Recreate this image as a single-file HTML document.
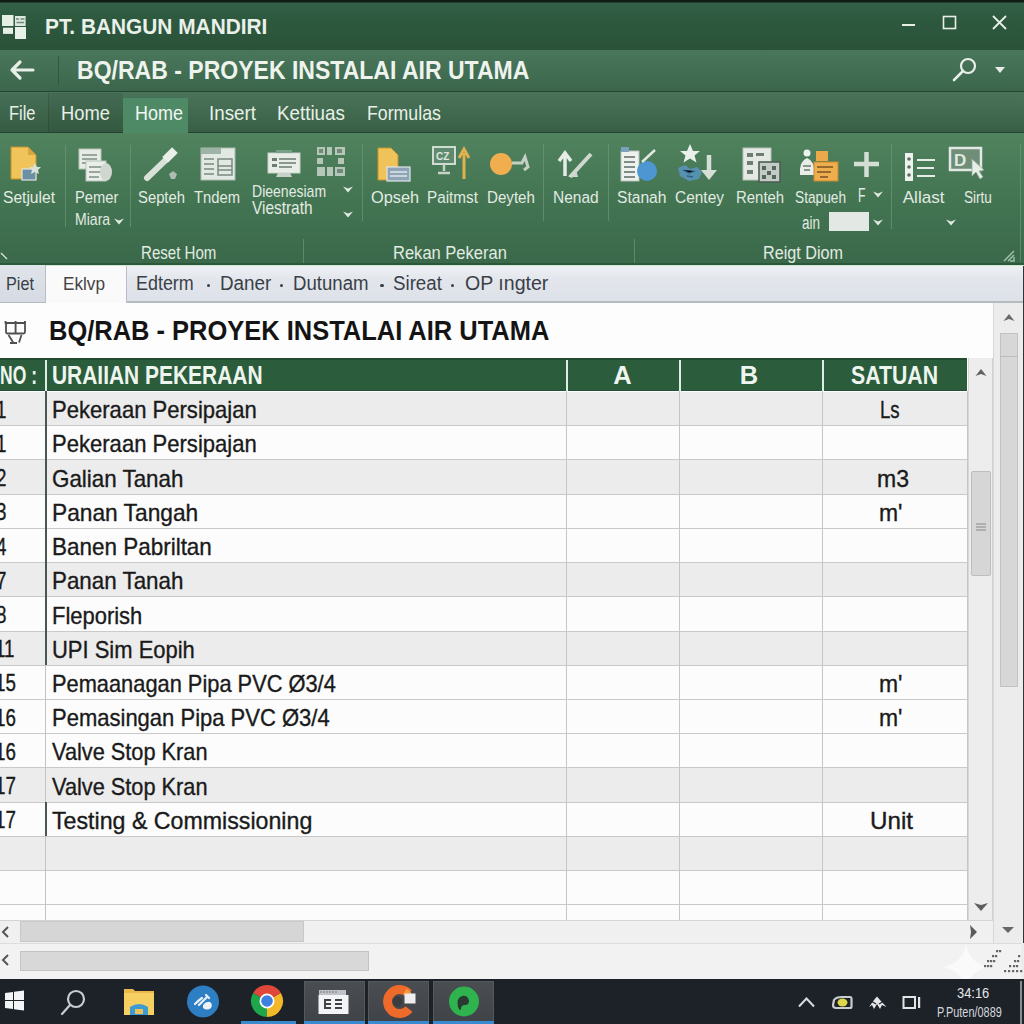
<!DOCTYPE html>
<html><head><meta charset="utf-8">
<style>
*{margin:0;padding:0;box-sizing:border-box}
html,body{width:1024px;height:1024px;overflow:hidden;background:#fff;font-family:"Liberation Sans",sans-serif}
.a{position:absolute}
.t{position:absolute;white-space:nowrap;line-height:1;transform-origin:0 0}
svg{position:absolute;overflow:visible}
</style></head><body>

<div class="a" style="left:0;top:0;width:1024px;height:50px;background:linear-gradient(#0f1c14 0,#0f1c14 2px,#34604a 3px,#2e5a40 30%,#2a5239 100%)"></div>
<svg style="left:0;top:0" width="40" height="50">
<rect x="2" y="15" width="11.5" height="11" fill="#e6efe6"/>
<rect x="15" y="16" width="10.6" height="10" fill="#dfe8df"/>
<path d="M16 19 H19 M20.5 19 H24.5 M16.5 22.5 H24" stroke="#6f8a78" stroke-width="1.6"/>
<rect x="3" y="27.7" width="10" height="6.2" fill="#e6efe6"/>
<rect x="15" y="27" width="11" height="12" fill="#e8f0e8"/>
</svg>
<div class="t" style="left:45.4px;top:15.5px;font-size:22.17px;font-weight:bold;color:#eaf1ea;transform:scaleX(0.941);">PT. BANGUN MANDIRI</div>
<svg style="left:880px;top:0" width="144" height="50">
<rect x="22" y="24" width="13" height="2" fill="#e8efe8"/>
<rect x="63.5" y="16.5" width="12" height="12" fill="none" stroke="#e8efe8" stroke-width="1.6"/>
<path d="M113 16 L126 29 M126 16 L113 29" stroke="#e8efe8" stroke-width="1.8"/>
</svg>
<div class="a" style="left:0;top:50px;width:1024px;height:42px;background:linear-gradient(#4a765c,#416d52 60%,#3b664b);border-bottom:1.5px solid #24452f"></div>
<svg style="left:0;top:50px" width="80" height="42">
<path d="M12 20 H33 M12 20 L20 12 M12 20 L20 28" stroke="#e8efe8" stroke-width="3.2" fill="none" stroke-linecap="round" stroke-linejoin="round"/>
<rect x="58" y="6" width="1" height="29" fill="#2f5a3d"/>
</svg>
<div class="t" style="left:76.8px;top:57.2px;font-size:26.38px;font-weight:bold;color:#eef3ee;transform:scaleX(0.873);">BQ/RAB - PROYEK INSTALAI AIR UTAMA</div>
<svg style="left:940px;top:50px" width="84" height="42">
<circle cx="28" cy="16" r="7" fill="none" stroke="#e8efe8" stroke-width="2.2"/>
<path d="M23 21 L14 30" stroke="#e8efe8" stroke-width="2.6" stroke-linecap="round"/>
<path d="M55 17 L65 17 L60 23 Z" fill="#e8efe8"/>
</svg>
<div class="a" style="left:0;top:92px;width:1024px;height:41px;background:linear-gradient(#4a735b,#416a50 50%,#385f46);border-bottom:1.5px solid #23432e"></div>
<div class="a" style="left:0;top:93px;width:48px;height:39px;background:rgba(0,0,0,.03)"></div>
<div class="a" style="left:48px;top:93px;width:75px;height:39px;background:rgba(0,0,0,.07);border-left:1px solid rgba(0,0,0,.12)"></div>
<div class="a" style="left:123px;top:98px;width:65px;height:35px;background:#4f8a67"></div>
<div class="t" style="left:8.5px;top:102.1px;font-size:21.01px;color:#e8f0e8;transform:scaleX(0.783);">File</div>
<div class="t" style="left:61.0px;top:102.1px;font-size:21.01px;color:#e8f0e8;transform:scaleX(0.873);">Home</div>
<div class="t" style="left:135.0px;top:102.1px;font-size:21.01px;color:#f2f7f2;transform:scaleX(0.855);">Home</div>
<div class="t" style="left:209.0px;top:102.1px;font-size:21.01px;color:#e8f0e8;transform:scaleX(0.895);">Insert</div>
<div class="t" style="left:277.0px;top:102.1px;font-size:21.01px;color:#e8f0e8;transform:scaleX(0.895);">Kettiuas</div>
<div class="t" style="left:367.0px;top:102.1px;font-size:21.01px;color:#e8f0e8;transform:scaleX(0.844);">Formulas</div>
<div class="a" style="left:0;top:133px;width:1024px;height:132px;background:linear-gradient(#52835f,#487a57 30%,#3f704f 70%,#3a684a)"></div>
<div class="a" style="left:0;top:263px;width:1024px;height:2px;background:#2c583a"></div>
<div class="a" style="left:65px;top:145px;width:1px;height:82px;background:#6a9878;opacity:.7"></div>
<div class="a" style="left:130px;top:145px;width:1px;height:82px;background:#6a9878;opacity:.7"></div>
<div class="a" style="left:362px;top:144px;width:1px;height:77px;background:#6a9878;opacity:.7"></div>
<div class="a" style="left:543px;top:144px;width:1px;height:77px;background:#6a9878;opacity:.7"></div>
<div class="a" style="left:608px;top:144px;width:1px;height:77px;background:#6a9878;opacity:.7"></div>
<div class="a" style="left:891px;top:144px;width:1px;height:85px;background:#6a9878;opacity:.7"></div>
<div class="a" style="left:1020px;top:144px;width:1px;height:118px;background:#6a9878;opacity:.7"></div>
<div class="a" style="left:303px;top:239px;width:1px;height:24px;background:#6a9878;opacity:.7"></div>
<div class="a" style="left:634px;top:239px;width:1px;height:24px;background:#6a9878;opacity:.7"></div>
<div class="t" style="left:3.0px;top:189.1px;font-size:17.10px;color:#e2ebe2;transform:scaleX(0.912);">Setjulet</div>
<div class="t" style="left:138.0px;top:189.1px;font-size:17.10px;color:#e2ebe2;transform:scaleX(0.867);">Septeh</div>
<div class="t" style="left:194.0px;top:189.1px;font-size:17.10px;color:#e2ebe2;transform:scaleX(0.865);">Tndem</div>
<div class="t" style="left:371.4px;top:189.1px;font-size:17.10px;color:#e2ebe2;transform:scaleX(0.957);">Opseh</div>
<div class="t" style="left:427.0px;top:189.1px;font-size:17.10px;color:#e2ebe2;transform:scaleX(0.894);">Paitmst</div>
<div class="t" style="left:487.0px;top:189.1px;font-size:17.10px;color:#e2ebe2;transform:scaleX(0.885);">Deyteh</div>
<div class="t" style="left:553.0px;top:189.1px;font-size:17.10px;color:#e2ebe2;transform:scaleX(0.905);">Nenad</div>
<div class="t" style="left:616.5px;top:189.1px;font-size:17.10px;color:#e2ebe2;transform:scaleX(0.913);">Stanah</div>
<div class="t" style="left:675.0px;top:189.1px;font-size:17.10px;color:#e2ebe2;transform:scaleX(0.904);">Centey</div>
<div class="t" style="left:735.8px;top:189.1px;font-size:17.10px;color:#e2ebe2;transform:scaleX(0.874);">Renteh</div>
<div class="t" style="left:795.0px;top:189.1px;font-size:17.10px;color:#e2ebe2;transform:scaleX(0.801);">Stapueh</div>
<div class="t" style="left:902.7px;top:189.1px;font-size:17.10px;color:#e2ebe2;">Allast</div>
<div class="t" style="left:964.4px;top:189.1px;font-size:17.10px;color:#e2ebe2;transform:scaleX(0.794);">Sirtu</div>
<div class="t" style="left:74.7px;top:189.1px;font-size:17.10px;color:#e2ebe2;transform:scaleX(0.860);">Pemer</div>
<div class="t" style="left:74.7px;top:210.7px;font-size:17.39px;color:#e2ebe2;transform:scaleX(0.810);">Miara</div>
<div class="t" style="left:252.4px;top:182.9px;font-size:16.38px;color:#e2ebe2;transform:scaleX(0.858);">Dieenesiam</div>
<div class="t" style="left:252.4px;top:199.5px;font-size:17.97px;color:#e2ebe2;transform:scaleX(0.858);">Viestrath</div>
<div class="t" style="left:858.0px;top:184.8px;font-size:20.29px;color:#e2ebe2;transform:scaleX(0.606);">F</div>
<div class="t" style="left:801.5px;top:213.7px;font-size:18.00px;color:#e2ebe2;transform:scaleX(0.749);">ain</div>
<div class="a" style="left:829px;top:212px;width:40px;height:19px;background:#e4e8e4"></div>
<svg style="left:112.5px;top:217px" width="12" height="8"><path d="M1 1.5 L6 3.5 L11 1.5 L6 7.5 Z" fill="#e2ebe2"/></svg>
<svg style="left:342px;top:185px" width="12" height="8"><path d="M1 1.5 L6 3.5 L11 1.5 L6 7.5 Z" fill="#e2ebe2"/></svg>
<svg style="left:342px;top:210px" width="12" height="8"><path d="M1 1.5 L6 3.5 L11 1.5 L6 7.5 Z" fill="#e2ebe2"/></svg>
<svg style="left:872px;top:190px" width="12" height="8"><path d="M1 1.5 L6 3.5 L11 1.5 L6 7.5 Z" fill="#e2ebe2"/></svg>
<svg style="left:872px;top:218px" width="12" height="8"><path d="M1 1.5 L6 3.5 L11 1.5 L6 7.5 Z" fill="#e2ebe2"/></svg>
<svg style="left:944.5px;top:218px" width="12" height="8"><path d="M1 1.5 L6 3.5 L11 1.5 L6 7.5 Z" fill="#e2ebe2"/></svg>
<div class="t" style="left:140.6px;top:243.5px;font-size:18.70px;color:#e2ebe2;transform:scaleX(0.807);">Reset Hom</div>
<div class="t" style="left:393.0px;top:243.5px;font-size:18.70px;color:#e2ebe2;transform:scaleX(0.884);">Rekan Pekeran</div>
<div class="t" style="left:763.0px;top:243.5px;font-size:18.70px;color:#e2ebe2;transform:scaleX(0.865);">Reigt Diom</div>
<svg style="left:1000px;top:248px" width="20" height="16"><path d="M4 13 L14 3 M8 13 L14 7 M10 13 H14 V9" stroke="#9dbfa6" stroke-width="1.5" fill="none"/></svg>
<svg style="left:0;top:250px" width="10" height="10"><path d="M1 3 L7 9" stroke="#e2ebe2" stroke-width="1.2"/></svg>
<svg style="left:8px;top:145px" width="34" height="38">
<path d="M3 2 H20 L28 10 V34 H3 Z" fill="#f1c35b" stroke="#c6922c" stroke-width="1"/>
<path d="M20 2 V10 H28" fill="#d9a441"/>
<rect x="14" y="24" width="14" height="11" fill="#6b8fa3" stroke="#dfe6e0" stroke-width="1.2"/>
<path d="M27 18 L29 22 L33 22 L30 25 L31 29 L27 27 L23 29 L24 25 L21 22 L25 22 Z" fill="#d8e2d8"/>
</svg>
<svg style="left:77px;top:147px" width="38" height="38">
<rect x="2" y="2" width="22" height="20" fill="#e6ebe6" stroke="#b8c4b8"/>
<path d="M5 8 H20 M5 12 H20 M5 16 H14" stroke="#7f8f85" stroke-width="1.5"/>
<rect x="9" y="14" width="20" height="20" fill="#eaeeea" stroke="#b8c4b8"/>
<path d="M12 20 H26 M12 25 H26 M12 30 H22" stroke="#7f8f85" stroke-width="1.5"/>
<ellipse cx="29" cy="25" rx="6" ry="9" fill="#d0d6d0"/>
</svg>
<svg style="left:144px;top:146px" width="38" height="38">
<path d="M3 32 L28 8" stroke="#d8e2d8" stroke-width="6" stroke-linecap="round"/>
<rect x="22" y="2" width="8" height="14" transform="rotate(45 26 9)" fill="#e8eee8"/>
<path d="M29 25 L33 28 L31 33 L27 33 L25 28 Z" fill="#aebcae"/>
</svg>
<svg style="left:200px;top:146px" width="38" height="38">
<rect x="1" y="2" width="34" height="32" fill="#e2e8e2" stroke="#b0bcb0"/>
<rect x="1" y="2" width="20" height="6" fill="#9eb4a6"/>
<path d="M4 13 H14 M4 18 H14 M4 23 H14 M4 28 H14" stroke="#7a8a80" stroke-width="1.6"/>
<rect x="18" y="13" width="14" height="16" fill="none" stroke="#7a8a80" stroke-width="1.5"/>
<path d="M18 20 H32 M18 24 H32" stroke="#7a8a80" stroke-width="1.3"/>
</svg>
<svg style="left:266px;top:149px" width="36" height="32">
<rect x="2" y="4" width="32" height="20" fill="#e8ede8" stroke="#c8d2c8"/>
<rect x="6" y="9" width="5" height="3" fill="#6a7c70"/><rect x="6" y="15" width="5" height="3" fill="#6a7c70"/>
<path d="M13 10 H30 M13 14 H30 M13 18 H26" stroke="#6a7c70" stroke-width="1.6"/>
<path d="M12 24 L10 28 H26 L24 24" fill="#c9d2c9"/>
<rect x="10" y="1" width="16" height="3" fill="#7aa08a"/>
</svg>
<svg style="left:316px;top:145px" width="32" height="34">
<g fill="#b6c6b8"><rect x="1" y="2" width="8" height="8"/><rect x="11" y="2" width="5" height="8"/><rect x="19" y="2" width="10" height="8"/>
<rect x="1" y="13" width="6" height="6"/><rect x="22" y="13" width="6" height="6"/>
<rect x="1" y="22" width="8" height="9"/><rect x="11" y="22" width="6" height="9"/><rect x="19" y="22" width="10" height="9"/></g>
<g fill="#6f8a76"><rect x="3" y="4" width="4" height="4"/><rect x="21" y="4" width="5" height="4"/><rect x="21" y="24" width="6" height="4"/></g>
</svg>
<svg style="left:376px;top:146px" width="40" height="38">
<path d="M2 2 H15 L22 9 V34 H2 Z" fill="#f0c25a" stroke="#c8952f"/>
<rect x="11" y="21" width="23" height="14" fill="#8fa4b6" stroke="#dfe6ea" stroke-width="1.2"/>
<path d="M14 26 H31 M14 30 H31" stroke="#dfe6ea" stroke-width="1.3"/>
</svg>
<svg style="left:431px;top:145px" width="40" height="38">
<rect x="2" y="2" width="22" height="17" fill="#5f8a6e" stroke="#dde6dd" stroke-width="1.8"/>
<text x="5" y="15" font-size="10" font-family="Liberation Sans" font-weight="bold" fill="#dde6dd">CZ</text>
<path d="M13 19 V26 M7 28 H19" stroke="#c8d2c8" stroke-width="2.5"/>
<path d="M33 34 V8 M28 13 L33 4 L38 13" stroke="#e0b150" stroke-width="3" fill="none"/>
</svg>
<svg style="left:488px;top:150px" width="42" height="28">
<circle cx="13" cy="14" r="11" fill="#f0ae4f"/>
<path d="M24 13 H34 L37 7 L40 17 L36 20" stroke="#c4d0c4" stroke-width="3" fill="none"/>
</svg>
<svg style="left:556px;top:148px" width="40" height="32">
<path d="M9 28 V8 M3 13 L9 5 L15 13" stroke="#e6ece6" stroke-width="3.5" fill="none"/>
<path d="M14 29 L35 6" stroke="#cfd8cf" stroke-width="4"/>
<path d="M12 29 L20 22 L22 29 Z" fill="#cfd8cf"/>
</svg>
<svg style="left:620px;top:145px" width="40" height="40">
<rect x="1" y="6" width="18" height="30" fill="#eef2ee" stroke="#b8c2b8"/>
<rect x="1" y="2" width="8" height="5" fill="#7ea0c0"/>
<path d="M4 12 H15 M4 17 H15 M4 22 H15 M4 27 H15 M4 32 H15" stroke="#5c6c64" stroke-width="1.6"/>
<circle cx="27" cy="26" r="10" fill="#4d96d1"/>
<path d="M22 17 L35 5" stroke="#e0e8e0" stroke-width="2.5"/>
</svg>
<svg style="left:675px;top:143px" width="44" height="42">
<path d="M15 1 L18 8 L25 8 L19.5 12.5 L21.5 19.5 L15 15.5 L8.5 19.5 L10.5 12.5 L5 8 L12 8 Z" fill="#eaf0ea"/>
<path d="M3 25 L10 22 L15 26 L22 24 L27 29 L24 36 L14 38 L5 33 Z" fill="#5b95bf" opacity=".85"/>
<path d="M8 27 L14 30 L20 28 M12 33 L18 34" stroke="#2f5f80" stroke-width="1.3"/>
<path d="M34 12 V32" stroke="#d6dfd6" stroke-width="4.5"/><path d="M26 27 L34 37 L42 27 Z" fill="#d6dfd6"/>
</svg>
<svg style="left:742px;top:146px" width="40" height="38">
<rect x="1" y="2" width="28" height="32" fill="#e4e9e4" stroke="#b9c3b9"/>
<g fill="#6d7d73"><rect x="5" y="7" width="6" height="4"/><rect x="14" y="7" width="8" height="3"/><rect x="5" y="15" width="6" height="4"/><rect x="5" y="24" width="6" height="4"/></g>
<rect x="17" y="16" width="21" height="20" fill="#c2ccc4" stroke="#4d5d55" stroke-width="1.6"/>
<g fill="#56665c"><rect x="20" y="20" width="4" height="4"/><rect x="30" y="20" width="4" height="4"/><rect x="25" y="25" width="4" height="4"/><rect x="20" y="29" width="4" height="4"/><rect x="30" y="29" width="4" height="4"/></g>
</svg>
<svg style="left:798px;top:147px" width="44" height="38">
<circle cx="9" cy="6" r="3.5" fill="#eef2ee"/>
<path d="M2 28 Q1 14 9 11 Q17 14 17 28 Z" fill="#e8ede8"/>
<path d="M5 19 H13 M6 23 H12" stroke="#6a7a70" stroke-width="1.6"/>
<rect x="18" y="4" width="12" height="10" fill="#eaa94a"/>
<rect x="16" y="15" width="24" height="19" fill="#eeae50" stroke="#c88a30"/>
<path d="M19 20 H35 M19 25 H33 M22 30 H30" stroke="#7a5420" stroke-width="1.3"/>
</svg>
<svg style="left:852px;top:151px" width="30" height="28">
<path d="M2 13 H27 M14.5 1 V26" stroke="#d5ded5" stroke-width="4.5"/>
</svg>
<svg style="left:903px;top:151px" width="34" height="32">
<rect x="2" y="2" width="8" height="28" fill="#eef2ee"/>
<circle cx="6" cy="8" r="1.8" fill="#5a6a60"/><circle cx="6" cy="16" r="1.8" fill="#5a6a60"/><circle cx="6" cy="24" r="1.8" fill="#5a6a60"/>
<path d="M14 9 H32 M14 17 H31 M14 25 H32" stroke="#e6ece6" stroke-width="2.2"/>
</svg>
<svg style="left:948px;top:146px" width="40" height="36">
<rect x="2" y="2" width="31" height="22" fill="#6e8e78" stroke="#e2e8e2" stroke-width="2.5"/>
<text x="6" y="20" font-size="17" font-family="Liberation Sans" font-weight="bold" fill="#e2e9e2">D</text>
<path d="M24 13 L24 30 L28 26 L32 33 L35 31 L31 25 L36 24 Z" fill="#e8eee8" stroke="#9aa89e" stroke-width=".8"/>
</svg>
<div class="a" style="left:0;top:265px;width:1024px;height:38px;background:linear-gradient(#eef1f4,#e2e6ec 40%,#dde1e8);border-bottom:2px solid #b6bbc2;border-top:1px solid #cfe3d6"></div>
<div class="a" style="left:0;top:265px;width:46px;height:37px;background:linear-gradient(#dfe3ea,#d6dbe3);border-right:1px solid #b9bec6"></div>
<div class="a" style="left:46px;top:266px;width:81px;height:38px;background:#fafafa;border-right:1px solid #b9bec6"></div>
<div class="t" style="left:6.0px;top:273.9px;font-size:19.13px;color:#3a3f47;transform:scaleX(0.848);">Piet</div>
<div class="t" style="left:63.0px;top:273.9px;font-size:19.13px;color:#444;transform:scaleX(0.898);">Eklvp</div>
<div class="t" style="left:136.0px;top:273.6px;font-size:19.57px;color:#3a3f47;transform:scaleX(0.916);">Edterm</div>
<div class="t" style="left:219.6px;top:273.6px;font-size:19.57px;color:#3a3f47;transform:scaleX(0.964);">Daner</div>
<div class="t" style="left:292.9px;top:273.6px;font-size:19.57px;color:#3a3f47;transform:scaleX(0.952);">Dutunam</div>
<div class="t" style="left:393.0px;top:273.6px;font-size:19.57px;color:#3a3f47;transform:scaleX(0.956);">Sireat</div>
<div class="t" style="left:465.0px;top:273.6px;font-size:19.57px;color:#3a3f47;">OP ıngter</div>
<div class="a" style="left:206.7px;top:284px;width:3.4px;height:3.4px;border-radius:2px;background:#3a3f47"></div>
<div class="a" style="left:279.9px;top:284px;width:3.4px;height:3.4px;border-radius:2px;background:#3a3f47"></div>
<div class="a" style="left:380.3px;top:284px;width:3.4px;height:3.4px;border-radius:2px;background:#3a3f47"></div>
<div class="a" style="left:450.8px;top:284px;width:3.4px;height:3.4px;border-radius:2px;background:#3a3f47"></div>
<div class="a" style="left:0;top:303px;width:993px;height:55px;background:#fdfdfd"></div>
<svg style="left:0;top:312px" width="32" height="40">
<rect x="6" y="11" width="19" height="10.5" rx="1.5" fill="none" stroke="#505050" stroke-width="1.8"/>
<path d="M4.8 11 H25.8 M15.6 9 V21 M5.6 9 V12 M25 9 V12" stroke="#505050" stroke-width="1.9"/>
<path d="M8.5 23 L13.2 30.5 M21.5 23 L19 30.5 M10 31 H17" stroke="#505050" stroke-width="1.8" fill="none"/>
</svg>
<div class="t" style="left:49.2px;top:316.6px;font-size:27.54px;font-weight:bold;color:#141414;transform:scaleX(0.925);">BQ/RAB - PROYEK INSTALAI AIR UTAMA</div>
<div class="a" style="left:0;top:357.5px;width:967px;height:33.5px;background:#2b5c3c;border-top:2px solid #214a30;border-bottom:1px solid #24513a"></div>
<div class="a" style="left:45px;top:360px;width:1.5px;height:31px;background:#dfeee2"></div>
<div class="a" style="left:566px;top:360px;width:1.5px;height:31px;background:#dfeee2"></div>
<div class="a" style="left:679px;top:360px;width:1.5px;height:31px;background:#dfeee2"></div>
<div class="a" style="left:822px;top:360px;width:1.5px;height:31px;background:#dfeee2"></div>
<div class="t" style="left:0.0px;top:362.7px;font-size:25.51px;font-weight:bold;color:#eef5ee;transform:scaleX(0.687);">NO :</div>
<div class="t" style="left:52.0px;top:362.7px;font-size:25.51px;font-weight:bold;color:#eef5ee;transform:scaleX(0.821);">URAIIAN PEKERAAN</div>
<div class="t" style="left:613.3px;top:362.7px;font-size:25.51px;font-weight:bold;color:#eef5ee;">A</div>
<div class="t" style="left:739.8px;top:362.7px;font-size:25.51px;font-weight:bold;color:#eef5ee;">B</div>
<div class="t" style="left:851.0px;top:362.7px;font-size:25.51px;font-weight:bold;color:#eef5ee;transform:scaleX(0.834);">SATUAN</div>
<div class="a" style="left:0;top:392.00px;width:968px;height:34.22px;background:#ececec"></div>
<div class="a" style="left:0;top:425.22px;width:968px;height:1.4px;background:#c9c9c9"></div>
<div class="t" style="left:-4.5px;top:398.6px;font-size:23.5px;color:#1a1a1a;-webkit-text-stroke:.35px #1a1a1a;transform:scaleX(.8)">1</div>
<div class="t" style="left:52.2px;top:398.2px;font-size:24.00px;color:#1a1a1a;transform:scaleX(0.919);-webkit-text-stroke:.35px #1a1a1a;">Pekeraan Persipajan</div>
<div class="t" style="left:880.4px;top:398.2px;font-size:24.00px;color:#1a1a1a;transform:scaleX(0.774);-webkit-text-stroke:.35px #1a1a1a;">Ls</div>
<div class="a" style="left:0;top:426.22px;width:968px;height:34.22px;background:#fcfcfc"></div>
<div class="a" style="left:0;top:459.44px;width:968px;height:1.4px;background:#c9c9c9"></div>
<div class="t" style="left:-4.5px;top:432.8px;font-size:23.5px;color:#1a1a1a;-webkit-text-stroke:.35px #1a1a1a;transform:scaleX(.8)">1</div>
<div class="t" style="left:52.2px;top:432.4px;font-size:24.00px;color:#1a1a1a;transform:scaleX(0.919);-webkit-text-stroke:.35px #1a1a1a;">Pekeraan Persipajan</div>
<div class="a" style="left:0;top:460.44px;width:968px;height:34.22px;background:#ececec"></div>
<div class="a" style="left:0;top:493.66px;width:968px;height:1.4px;background:#c9c9c9"></div>
<div class="t" style="left:-4.5px;top:467.1px;font-size:23.5px;color:#1a1a1a;-webkit-text-stroke:.35px #1a1a1a;transform:scaleX(.8)">2</div>
<div class="t" style="left:52.2px;top:466.6px;font-size:24.00px;color:#1a1a1a;transform:scaleX(0.932);-webkit-text-stroke:.35px #1a1a1a;">Galian Tanah</div>
<div class="t" style="left:877.0px;top:466.6px;font-size:24.00px;color:#1a1a1a;transform:scaleX(0.959);-webkit-text-stroke:.35px #1a1a1a;">m3</div>
<div class="a" style="left:0;top:494.66px;width:968px;height:34.22px;background:#fcfcfc"></div>
<div class="a" style="left:0;top:527.88px;width:968px;height:1.4px;background:#c9c9c9"></div>
<div class="t" style="left:-4.5px;top:501.3px;font-size:23.5px;color:#1a1a1a;-webkit-text-stroke:.35px #1a1a1a;transform:scaleX(.8)">3</div>
<div class="t" style="left:52.2px;top:500.9px;font-size:24.00px;color:#1a1a1a;transform:scaleX(0.947);-webkit-text-stroke:.35px #1a1a1a;">Panan Tangah</div>
<div class="t" style="left:879.0px;top:500.9px;font-size:24.00px;color:#1a1a1a;transform:scaleX(0.955);-webkit-text-stroke:.35px #1a1a1a;">m'</div>
<div class="a" style="left:0;top:528.88px;width:968px;height:34.22px;background:#fcfcfc"></div>
<div class="a" style="left:0;top:562.10px;width:968px;height:1.4px;background:#c9c9c9"></div>
<div class="t" style="left:-4.5px;top:535.5px;font-size:23.5px;color:#1a1a1a;-webkit-text-stroke:.35px #1a1a1a;transform:scaleX(.8)">4</div>
<div class="t" style="left:52.2px;top:535.1px;font-size:24.00px;color:#1a1a1a;transform:scaleX(0.936);-webkit-text-stroke:.35px #1a1a1a;">Banen Pabriltan</div>
<div class="a" style="left:0;top:563.10px;width:968px;height:34.22px;background:#ececec"></div>
<div class="a" style="left:0;top:596.32px;width:968px;height:1.4px;background:#c9c9c9"></div>
<div class="t" style="left:-4.5px;top:569.7px;font-size:23.5px;color:#1a1a1a;-webkit-text-stroke:.35px #1a1a1a;transform:scaleX(.8)">7</div>
<div class="t" style="left:52.2px;top:569.3px;font-size:24.00px;color:#1a1a1a;transform:scaleX(0.932);-webkit-text-stroke:.35px #1a1a1a;">Panan Tanah</div>
<div class="a" style="left:0;top:597.32px;width:968px;height:34.22px;background:#fcfcfc"></div>
<div class="a" style="left:0;top:630.54px;width:968px;height:1.4px;background:#c9c9c9"></div>
<div class="t" style="left:-4.5px;top:603.9px;font-size:23.5px;color:#1a1a1a;-webkit-text-stroke:.35px #1a1a1a;transform:scaleX(.8)">8</div>
<div class="t" style="left:52.2px;top:603.5px;font-size:24.00px;color:#1a1a1a;transform:scaleX(0.915);-webkit-text-stroke:.35px #1a1a1a;">Fleporish</div>
<div class="a" style="left:0;top:631.54px;width:968px;height:34.22px;background:#ececec"></div>
<div class="a" style="left:0;top:664.76px;width:968px;height:1.4px;background:#c9c9c9"></div>
<div class="t" style="left:-4.7px;top:638.2px;font-size:23.5px;color:#1a1a1a;-webkit-text-stroke:.35px #1a1a1a;transform:scaleX(.8)">11</div>
<div class="t" style="left:52.2px;top:637.7px;font-size:24.00px;color:#1a1a1a;transform:scaleX(0.915);-webkit-text-stroke:.35px #1a1a1a;">UPI Sim Eopih</div>
<div class="a" style="left:0;top:665.76px;width:968px;height:34.22px;background:#fcfcfc"></div>
<div class="a" style="left:0;top:698.98px;width:968px;height:1.4px;background:#c9c9c9"></div>
<div class="t" style="left:-4.7px;top:672.4px;font-size:23.5px;color:#1a1a1a;-webkit-text-stroke:.35px #1a1a1a;transform:scaleX(.8)">15</div>
<div class="t" style="left:52.2px;top:672.0px;font-size:24.00px;color:#1a1a1a;transform:scaleX(0.909);-webkit-text-stroke:.35px #1a1a1a;">Pemaanagan Pipa PVC Ø3/4</div>
<div class="t" style="left:879.0px;top:672.0px;font-size:24.00px;color:#1a1a1a;transform:scaleX(0.955);-webkit-text-stroke:.35px #1a1a1a;">m'</div>
<div class="a" style="left:0;top:699.98px;width:968px;height:34.22px;background:#fcfcfc"></div>
<div class="a" style="left:0;top:733.20px;width:968px;height:1.4px;background:#c9c9c9"></div>
<div class="t" style="left:-4.7px;top:706.6px;font-size:23.5px;color:#1a1a1a;-webkit-text-stroke:.35px #1a1a1a;transform:scaleX(.8)">16</div>
<div class="t" style="left:52.2px;top:706.2px;font-size:24.00px;color:#1a1a1a;transform:scaleX(0.917);-webkit-text-stroke:.35px #1a1a1a;">Pemasingan Pipa PVC Ø3/4</div>
<div class="t" style="left:879.0px;top:706.2px;font-size:24.00px;color:#1a1a1a;transform:scaleX(0.955);-webkit-text-stroke:.35px #1a1a1a;">m'</div>
<div class="a" style="left:0;top:734.20px;width:968px;height:34.22px;background:#fcfcfc"></div>
<div class="a" style="left:0;top:767.42px;width:968px;height:1.4px;background:#c9c9c9"></div>
<div class="t" style="left:-4.7px;top:740.8px;font-size:23.5px;color:#1a1a1a;-webkit-text-stroke:.35px #1a1a1a;transform:scaleX(.8)">16</div>
<div class="t" style="left:52.2px;top:740.4px;font-size:24.00px;color:#1a1a1a;transform:scaleX(0.906);-webkit-text-stroke:.35px #1a1a1a;">Valve Stop Kran</div>
<div class="a" style="left:0;top:768.42px;width:968px;height:34.22px;background:#ececec"></div>
<div class="a" style="left:0;top:801.64px;width:968px;height:1.4px;background:#c9c9c9"></div>
<div class="t" style="left:-4.7px;top:775.0px;font-size:23.5px;color:#1a1a1a;-webkit-text-stroke:.35px #1a1a1a;transform:scaleX(.8)">17</div>
<div class="t" style="left:52.2px;top:774.6px;font-size:24.00px;color:#1a1a1a;transform:scaleX(0.906);-webkit-text-stroke:.35px #1a1a1a;">Valve Stop Kran</div>
<div class="a" style="left:0;top:802.64px;width:968px;height:34.22px;background:#fcfcfc"></div>
<div class="a" style="left:0;top:835.86px;width:968px;height:1.4px;background:#c9c9c9"></div>
<div class="t" style="left:-4.7px;top:809.3px;font-size:23.5px;color:#1a1a1a;-webkit-text-stroke:.35px #1a1a1a;transform:scaleX(.8)">17</div>
<div class="t" style="left:52.2px;top:808.8px;font-size:24.00px;color:#1a1a1a;transform:scaleX(0.966);-webkit-text-stroke:.35px #1a1a1a;">Testing &amp; Commissioning</div>
<div class="t" style="left:870.0px;top:808.8px;font-size:24.00px;color:#1a1a1a;transform:scaleX(1.007);-webkit-text-stroke:.35px #1a1a1a;">Unit</div>
<div class="a" style="left:0;top:836.86px;width:968px;height:34.22px;background:#ececec"></div>
<div class="a" style="left:0;top:870.08px;width:968px;height:1.4px;background:#c9c9c9"></div>
<div class="a" style="left:0;top:871.08px;width:968px;height:34.22px;background:#fcfcfc"></div>
<div class="a" style="left:0;top:904.30px;width:968px;height:1.4px;background:#c9c9c9"></div>
<div class="a" style="left:0;top:905.30px;width:968px;height:14.30px;background:#fcfcfc"></div>
<div class="a" style="left:45px;top:391px;width:1.2px;height:529px;background:#c4c4c4"></div>
<div class="a" style="left:45px;top:391px;width:1.7px;height:274px;background:#4c5650"></div>
<div class="a" style="left:45px;top:802px;width:1.7px;height:34px;background:#4c5650"></div>
<div class="a" style="left:566px;top:391px;width:1.2px;height:529px;background:#c6c6c6"></div>
<div class="a" style="left:679px;top:391px;width:1.2px;height:529px;background:#c6c6c6"></div>
<div class="a" style="left:822px;top:391px;width:1.2px;height:529px;background:#c6c6c6"></div>
<div class="a" style="left:967px;top:391px;width:1.2px;height:529px;background:#c6c6c6"></div>
<div class="a" style="left:968px;top:358px;width:25px;height:562px;background:#ededed;border-left:1px solid #d6d6d6;border-right:1px solid #d2d2d2"></div>
<svg style="left:975px;top:368px" width="12" height="9"><path d="M0.5 8 L6 1 L11.5 8 L6 6 Z" fill="#606060"/></svg>
<div class="a" style="left:970.5px;top:471px;width:20px;height:105px;background:#d6d6d6;border:1px solid #bdbdbd;border-radius:2px"></div>
<svg style="left:974px;top:522px" width="14" height="10"><path d="M2 2 H12 M2 5 H12 M2 8 H12" stroke="#888" stroke-width="1.2"/></svg>
<svg style="left:973px;top:901px" width="16" height="12"><path d="M1 2 L8 4 L15 2 L8 10 Z" fill="#5e5e5e"/></svg>
<div class="a" style="left:993px;top:303px;width:31px;height:676px;background:#ececec;border-left:1px solid #d8d8d8"></div>
<svg style="left:1002.5px;top:313px" width="12" height="9"><path d="M0.5 8 L6 1 L11.5 8 L6 6 Z" fill="#6a6a6a"/></svg>
<div class="a" style="left:999.5px;top:333px;width:18.5px;height:354px;background:#d7d7d7;border:1px solid #c2c2c2"></div>
<div class="a" style="left:999.5px;top:356px;width:18.5px;height:1px;background:#bcbcbc"></div>
<svg style="left:1000px;top:925px" width="16" height="10"><path d="M2 2 L14 2 L8 8 Z" fill="#666"/></svg>
<div class="a" style="left:1022.5px;top:266px;width:1.5px;height:677px;background:#333"></div>
<div class="a" style="left:0;top:920px;width:993px;height:23px;background:#f0f0f0;border-top:1px solid #d4d4d4"></div>
<div class="a" style="left:20px;top:921px;width:284px;height:21px;background:#d6d6d6;border:1px solid #c8c8c8"></div>
<svg style="left:0;top:925px" width="12" height="14"><path d="M8 2 L3 7 L8 12" stroke="#555" stroke-width="2" fill="none"/></svg>
<svg style="left:966px;top:924px" width="14" height="16"><path d="M4 1 L11 8 L4 15 L5 8 Z" fill="#5a5a5a"/></svg>
<div class="a" style="left:0;top:943px;width:1021px;height:36px;background:#f2f2f2;border-top:1px solid #dcdcdc"></div>
<div class="a" style="left:20px;top:950.5px;width:349px;height:20px;background:#d8d8d8;border:1px solid #c4c4c4"></div>
<svg style="left:0;top:953px" width="12" height="14"><path d="M8 2 L3 7 L8 12" stroke="#555" stroke-width="2" fill="none"/></svg>
<svg style="left:936px;top:937px" width="88" height="60"><path d="M30 6 Q33 27 54 30 Q33 33 30 54 Q27 33 6 30 Q27 27 30 6 Z" fill="#fbfbfb" opacity=".9"/><g fill="#666"><rect x="60" y="13" width="2.2" height="2.2"/><rect x="63" y="13" width="2.2" height="2.2"/><rect x="56" y="18" width="2.2" height="2.2"/><rect x="59" y="18" width="2.2" height="2.2"/><rect x="51" y="23" width="2.2" height="2.2"/><rect x="54" y="23" width="2.2" height="2.2"/><rect x="57" y="23" width="2.2" height="2.2"/><rect x="48" y="28" width="2.2" height="2.2"/><rect x="51" y="28" width="2.2" height="2.2"/><rect x="54" y="28" width="2.2" height="2.2"/><rect x="82" y="18" width="2.2" height="2.2"/><rect x="78" y="23" width="2.2" height="2.2"/><rect x="81" y="23" width="2.2" height="2.2"/><rect x="73" y="28" width="2.2" height="2.2"/><rect x="77" y="28" width="2.2" height="2.2"/><rect x="80" y="28" width="2.2" height="2.2"/><rect x="68" y="33" width="2.2" height="2.2"/><rect x="72" y="33" width="2.2" height="2.2"/><rect x="76" y="33" width="2.2" height="2.2"/><rect x="80" y="33" width="2.2" height="2.2"/><rect x="84" y="33" width="2.2" height="2.2"/></g></svg>
<div class="a" style="left:0;top:979px;width:1024px;height:45px;background:#1d2128"></div>
<svg style="left:0;top:979px" width="30" height="45">
<path d="M5 14 L13 13 V21 H5 Z M14 12.8 L24 11.5 V21 H14 Z M5 22 H13 V30 L5 29 Z M14 22 H24 V31.5 L14 30.2 Z" fill="#f2f4f6"/>
</svg>
<svg style="left:58px;top:979px" width="32" height="45">
<circle cx="18" cy="20" r="8" fill="none" stroke="#c8cdd2" stroke-width="2.2"/>
<path d="M12 26 L4 35" stroke="#c8cdd2" stroke-width="2.2" stroke-linecap="round"/>
</svg>
<svg style="left:122px;top:979px" width="36" height="45">
<path d="M2 10 H11 L13 12 H32 V36 H2 Z" fill="#eab94a"/>
<rect x="2" y="14" width="30" height="22" fill="#f6cf62"/>
<path d="M8 36 V28 Q17 22 26 28 V36 Z" fill="#3d9bd4"/>
<rect x="13" y="30" width="8" height="5" fill="#e8c25a"/>
</svg>
<svg style="left:186px;top:983px" width="36" height="36">
<circle cx="17" cy="18.5" r="16" fill="#2e7ec4"/>
<path d="M9 21 Q13 17 16 15 M13 22 Q17 18 21 14 M20 12 L23 15" stroke="#e8f0f8" stroke-width="2.2" fill="none" stroke-linecap="round"/><path d="M17 22 Q20 18 24 19 Q27 21 25 25 Q21 28 17 25 Z" fill="#eef3f8"/>
</svg>
<svg style="left:250px;top:984px" width="36" height="36"><path d="M17 17 L3.14 9.00 A16 16 0 0 1 30.86 9.00 Z" fill="#e0473a"/><path d="M17 17 L30.86 9.00 A16 16 0 0 1 17.00 33.00 Z" fill="#f3b72a"/><path d="M17 17 L17.00 33.00 A16 16 0 0 1 3.14 9.00 Z" fill="#1fa64a"/><circle cx="17" cy="17" r="7.5" fill="#fff"/><circle cx="17" cy="17" r="5.8" fill="#3f7fe0"/></svg>
<div class="a" style="left:304px;top:981px;width:61px;height:40px;background:linear-gradient(#4a4d52,#404347);border:1px solid #55585d;border-bottom:none"></div>
<div class="a" style="left:304px;top:1021px;width:61px;height:3px;background:#3a8ad0"></div>
<div class="a" style="left:368px;top:981px;width:61px;height:40px;background:linear-gradient(#4a4d52,#404347);border:1px solid #55585d;border-bottom:none"></div>
<div class="a" style="left:368px;top:1021px;width:61px;height:3px;background:#3a8ad0"></div>
<div class="a" style="left:432.5px;top:981px;width:61.5px;height:40px;background:linear-gradient(#4a4d52,#404347);border:1px solid #55585d;border-bottom:none"></div>
<div class="a" style="left:432.5px;top:1021px;width:61.5px;height:3px;background:#3a8ad0"></div>
<svg style="left:316px;top:987px" width="36" height="30">
<rect x="3" y="3" width="27" height="5" fill="#bfc3c7"/>
<path d="M4 5 H22" stroke="#777" stroke-width="1" stroke-dasharray="2 1"/>
<rect x="2.5" y="8" width="30" height="19" fill="#f3f4f5"/>
<path d="M9 13 H15 M9 17 H15 M9 21 H15 M19 13 H26 M19 17 H26 M19 21 H26 M9 12 V22" stroke="#3f4245" stroke-width="1.9"/>
</svg>
<svg style="left:381px;top:985px" width="36" height="34">
<path d="M27.5 8.5 A12 12 0 1 0 28 24" fill="none" stroke="#ee6a2a" stroke-width="9"/>
<path d="M24 6 A12 12 0 0 1 28 10" fill="none" stroke="#f39a3a" stroke-width="6"/>
<circle cx="16.5" cy="16.5" r="5" fill="#3a3c40"/>
<rect x="23.5" y="8.5" width="11" height="10" fill="#eeeeee"/>
</svg>
<svg style="left:446px;top:985px" width="36" height="34">
<circle cx="18" cy="16.5" r="15" fill="#2eb34f"/>
<path d="M12 22 Q10 13 16 11 Q22 10 23 16 Q23 20 19 20 Q15 20 15 24 Q14 27 12 22 Z" fill="#2a3a32"/>
</svg>
<div class="a" style="left:241px;top:1021px;width:55px;height:3px;background:#3a8ad0"></div>
<svg style="left:790px;top:979px" width="140" height="45">
<path d="M9 27.5 L16.5 19.5 L24 27.5" stroke="#d8dce0" stroke-width="2" fill="none"/>
<path d="M44 21 Q46 18 52 18 L60 18 Q61.5 18 61.5 20 L61.5 27.5 Q61.5 29 60 29 L46 29 Q43 29 43 26 Z" fill="none" stroke="#c9cbcd" stroke-width="2.2"/>
<ellipse cx="52.5" cy="23.5" rx="5" ry="4" fill="#dcd84a"/>
<path d="M79 28 L84 21 L87 17.5 L90 21 L96.5 28 L92 26 L90 30 L87 25 L84 30 L82 26 Z" fill="#e4e6e8"/>
<path d="M81 22 L86 25 M89 25 L94 22" stroke="#1d2128" stroke-width="1.2"/>
<rect x="113.5" y="18" width="11.5" height="11" fill="none" stroke="#e2e4e6" stroke-width="2"/>
<rect x="128" y="18" width="2.2" height="11" fill="#e2e4e6"/>
</svg>
<div class="t" style="left:956.7px;top:985.3px;font-size:15.51px;color:#e4e6ea;transform:scaleX(0.831);">34:16</div>
<div class="t" style="left:937.2px;top:1003.9px;font-size:15.36px;color:#d4d7dc;transform:scaleX(0.711);">P.Puten/0889</div>
<div class="a" style="left:1020px;top:981px;width:1.5px;height:43px;background:#8a8d92"></div>
</body></html>
